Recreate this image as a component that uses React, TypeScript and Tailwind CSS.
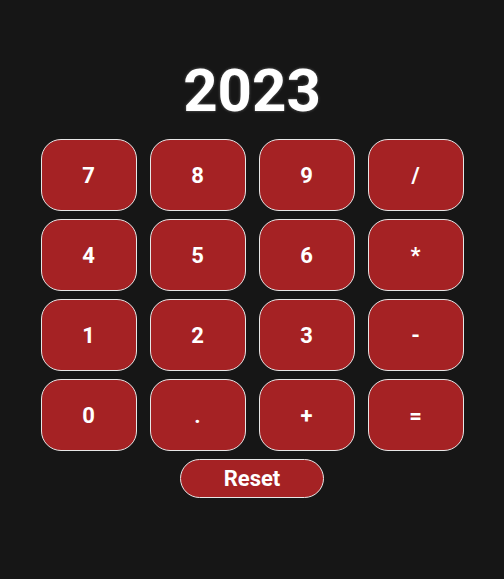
const keys = ["7", "8", "9", "/", "4", "5", "6", "*", "1", "2", "3", "-", "0", ".", "+", "="];

export default function App() {
  return (
    <div className="min-h-screen bg-[#161616] font-['Roboto',sans-serif] text-white">
      <div className="flex flex-col items-center pt-[61px]">
        <h1 className="text-[60px] font-bold leading-none [text-shadow:0_0_3px_rgba(255,255,255,0.35)]">
          2023
        </h1>
        <div className="mt-[18px] grid grid-cols-[repeat(4,96px)] gap-x-[13px] gap-y-[8px]">
          {keys.map((k) => (
            <button
              key={k}
              type="button"
              className="h-[72px] rounded-[20px] border border-[#e6e6e6] bg-[#a52224] text-[22px] font-bold text-white"
            >
              {k}
            </button>
          ))}
        </div>
        <button
          type="button"
          className="mt-[8px] h-[39px] w-[144px] rounded-full border border-[#e6e6e6] bg-[#a52224] text-[22px] font-bold text-white"
        >
          Reset
        </button>
      </div>
    </div>
  );
}
